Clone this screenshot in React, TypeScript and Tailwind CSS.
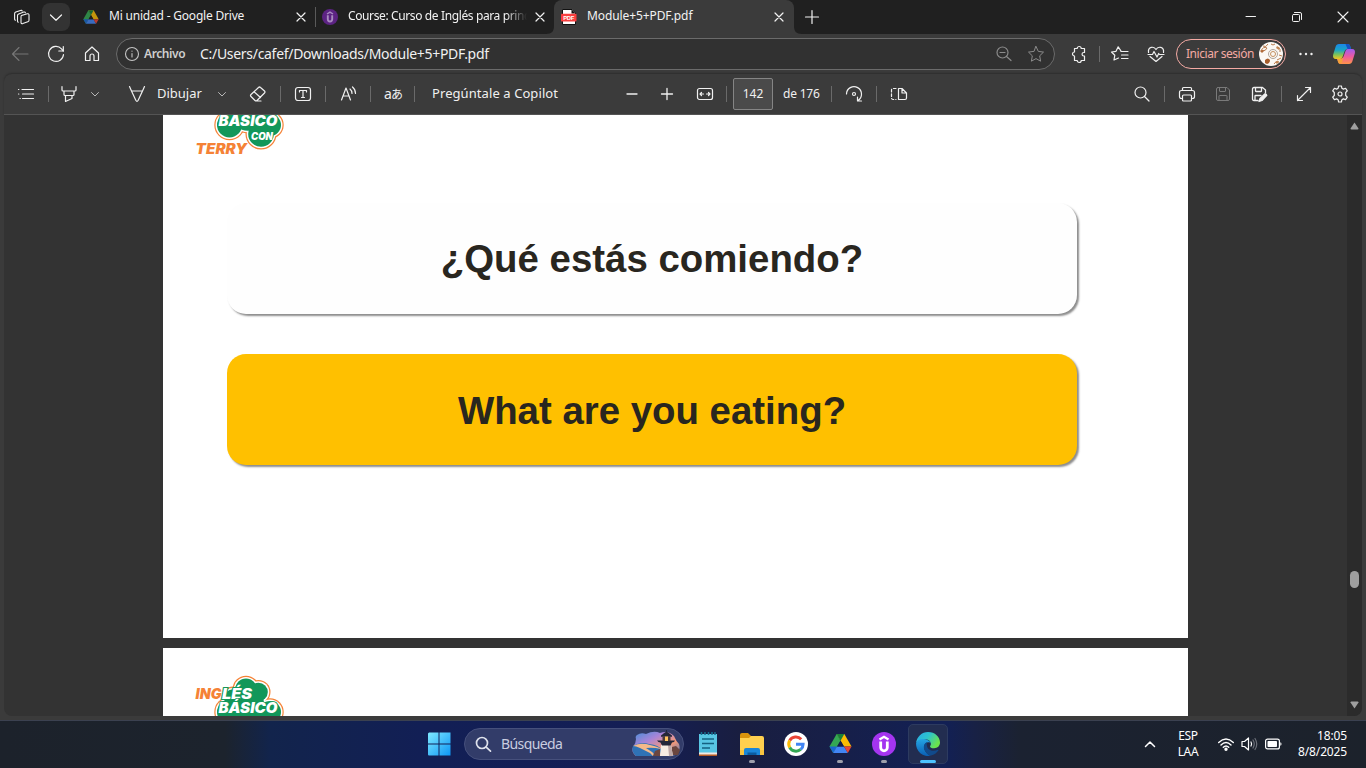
import type { ReactNode } from "react";

type SvgProps = { children: ReactNode; size?: number; sw?: number; className?: string };

function Ico({ children, size = 20, sw = 1, className = "" }: SvgProps) {
  return (
    <svg
      width={size}
      height={size}
      viewBox={`0 0 ${size} ${size}`}
      fill="none"
      stroke="currentColor"
      strokeWidth={sw}
      strokeLinecap="round"
      strokeLinejoin="round"
      className={`shrink-0 ${className}`}
    >
      {children}
    </svg>
  );
}

function Cell({ children, className = "" }: { children: ReactNode; className?: string }) {
  return <div className={`flex shrink-0 items-center justify-center ${className}`}>{children}</div>;
}

function Sep({ className = "" }: { className?: string }) {
  return (
    <div className={`w-3 shrink-0 pl-[6px] ${className}`}>
      <div className="h-4 w-px bg-[#6a6a6a]" />
    </div>
  );
}

const CloseX = () => (
  <Ico size={12} sw={1.2}>
    <path d="M2 2l8 8M10 2l-8 8" />
  </Ico>
);

const Chevron = ({ className = "" }: { className?: string }) => (
  <Ico size={12} sw={1} className={className}>
    <path d="M2.5 4.5L6 8l3.5-3.5" />
  </Ico>
);

function DriveLogo({ size, dim = false }: { size: number; dim?: boolean }) {
  return (
    <svg width={size} height={size} viewBox="0 0 24 24" className={`shrink-0 ${dim ? "opacity-75" : ""}`}>
      <path d="M16 2l7.5 13.2h-7.8L8 2z" fill="#fbbc04" />
      <path d="M8 2h8l-4 7z" fill="#188038" />
      <path d="M8 2l4 7-7.600 13L.5 15.200z" fill="#34a853" />
      <path d="M.5 15.2h7.8L4.4 22z" fill="#1967d2" />
      <path d="M8.3 15.2h7.4L19.6 22H4.4z" fill="#4285f4" />
      <path d="M15.7 15.2h7.8L19.6 22z" fill="#ea4335" />
      <path d="M12 9.2l3.6 6H8.4z" fill={dim ? "#202020" : "#151f4a"} />
    </svg>
  );
}

function UdemyLogo({ size, bg, fg }: { size: number; bg: string; fg: string }) {
  return (
    <svg width={size} height={size} viewBox="0 0 24 24" className="shrink-0">
      <circle cx="12" cy="12" r="12" fill={bg} />
      <path d="M7.5 7.500L12 4.700 16.500 7.500" fill="none" stroke={fg} strokeWidth="2.2" />
      <path d="M8.700 9.500v6a3.300 3.300 0 0 0 6.600 0v-6" fill="none" stroke={fg} strokeWidth="2.8" />
    </svg>
  );
}

function TabBar() {
  return (
    <div className="flex h-[34px] shrink-0 items-center bg-[#202020] text-[12px] text-[#f2f2f2]">
      <div className="w-[42px] shrink-0 pl-[13px]">
        <Ico size={18} sw={1.1}>
          <path d="M8.500 7.500l5.800-1.700c1-.3 1.700.2 1.700 1.200v5.200c0 .8-.4 1.300-1.200 1.600l-5 1.800c-1 .3-1.800-.2-1.800-1.200V8.900c0-.7.200-1.200.5-1.400z" />
          <path d="M5.300 14.200c-.6-.2-.8-.6-.8-1.300V7.500c0-.8.400-1.300 1.200-1.600l5-1.800c.9-.3 1.500 0 1.700.7" />
          <path d="M2.500 12.200c-.6-.2-.9-.6-.9-1.300V5.700c0-.8.400-1.300 1.200-1.600l4.700-1.700c.9-.3 1.500 0 1.700.6" />
        </Ico>
      </div>
      <Cell className="h-7 w-7 rounded-lg bg-[#333333]">
        <Ico size={14} sw={1.2}>
          <path d="M1.500 5L7 10.300 12.500 5" />
        </Ico>
      </Cell>
      <div className="flex w-[245px] shrink-0 items-center pb-px pl-[13px]">
        <DriveLogo size={16} dim />
        <span className="ml-[10px] w-[183px] pb-px whitespace-nowrap tracking-[-0.2px]">Mi unidad - Google Drive</span>
        <Cell className="w-[18px]"><CloseX /></Cell>
      </div>
      <div className="h-5 w-px bg-[#5a5a5a]" />
      <div className="flex w-[238px] shrink-0 items-center pb-px pl-[6px]">
        <UdemyLogo size={16} bg="#5c2383" fg="#a98cc0" />
        <span className="ml-[10px] w-[179px] overflow-hidden pb-px whitespace-nowrap tracking-[-0.38px] [mask-image:linear-gradient(to_right,black_88%,transparent)]">
          Course: Curso de Inglés para principiantes
        </span>
        <Cell className="ml-[4px] w-[18px]"><CloseX /></Cell>
      </div>
      <svg width="8" height="34" viewBox="0 0 8 34" className="-ml-2 shrink-0">
        <path d="M0 34c6 0 8-3 8-8v8z" fill="#3b3b3b" />
      </svg>
      <div className="flex h-[34px] w-[240px] shrink-0 items-center rounded-t-lg bg-[#3b3b3b] pb-px pl-[7px]">
        <svg width="16" height="16" viewBox="0 0 16 16" className="shrink-0">
          <path d="M1.500 .5h9.500L14.500 4v11.500h-13z" fill="#fff" stroke="#111" />
          <path d="M10.500 .5V4.500h4z" fill="#111" />
          <rect x="0" y="4.800" width="15.500" height="7.700" rx="0.800" fill="#f93e3e" />
          <text x="7.800" y="10.900" textAnchor="middle" textLength="11" fontSize="5.800" fontWeight="700" fill="#fff" fontFamily="Liberation Sans, sans-serif">PDF</text>
        </svg>
        <span className="ml-[10px] w-[183px] pb-px whitespace-nowrap tracking-[-0.1px]">Module+5+PDF.pdf</span>
        <Cell className="w-[18px]"><CloseX /></Cell>
      </div>
      <svg width="8" height="34" viewBox="0 0 8 34" className="shrink-0">
        <path d="M8 34c-6 0-8-3-8-8v8z" fill="#3b3b3b" />
      </svg>
      <Cell className="w-[19px] pb-px">
        <Ico size={16} sw={1.200}><path d="M8 1.500v13M1.500 8h13" /></Ico>
      </Cell>
      <div className="ml-auto flex">
        <Cell className="w-[46px]"><Ico size={12}><path d="M1 5.500h9.500" /></Ico></Cell>
        <Cell className="w-[46px]">
          <Ico size={12}>
            <rect x="1.500" y="3.500" width="7" height="7" rx="1" />
            <path d="M3.500 1.500h5.500q1.500 0 1.500 1.500v5.500" />
          </Ico>
        </Cell>
        <Cell className="w-[46px]"><Ico size={12} sw={1.1}><path d="M1 1l10 10M11 1L1 11" /></Ico></Cell>
      </div>
    </div>
  );
}

function AddressBar() {
  return (
    <div className="flex h-10 shrink-0 items-center bg-[#3b3b3b] pl-[2px] text-[#f0f0f0]">
      <Cell className="w-9 text-[#767676]"><Ico sw={1.100}><path d="M18 10H2.500M9 3.500L2.500 10 9 16.500" /></Ico></Cell>
      <Cell className="w-9">
        <Ico sw={1.2}>
          <path d="M17.500 10.500a7.500 7.500 0 1 1-2-5.700L17.300 7" /><path d="M17.300 2.500V7H12.800" />
        </Ico>
      </Cell>
      <Cell className="w-9">
        <Ico sw={1.2}><path d="M3.500 9L10 3l6.500 6v7.500H12V12a2 2 0 0 0-4 0v4.500H3.500z" /></Ico>
      </Cell>
      <div className="ml-[6px] flex h-8 w-[939px] shrink-0 items-center rounded-full border border-[#6b6b6b] bg-[#313131] pl-[6px]">
        <Ico size={18} className="text-[#c4c4c4]" sw={1.1}>
          <circle cx="9" cy="9" r="6.500" /><path d="M9 8.500v3.500M9 6v.2" />
        </Ico>
        <span className="ml-[3px] w-[56px] pb-px whitespace-nowrap text-[12px] font-semibold tracking-[-0.4px] text-[#cfcfcf]">Archivo</span>
        <span className="pb-[2px] whitespace-nowrap text-[14px] tracking-[-0.3px]">C:/Users/cafef/Downloads/Module+5+PDF.pdf</span>
        <div className="ml-auto flex pr-[2px] text-[#8b8b8b]">
          <Cell className="w-8">
            <Ico sw={1.200}><circle cx="8.500" cy="8.500" r="5.500" /><path d="M12.500 12.500l4.500 4M6 8.500h5" /></Ico>
          </Cell>
          <Cell className="w-8">
            <Ico><path d="M10 2.500l2.300 4.900 5.200.7-3.800 3.700.9 5.400-4.600-2.600-4.600 2.600.9-5.400L2.500 8.100l5.200-.7z" /></Ico>
          </Cell>
        </div>
      </div>
      <Cell className="ml-[6px] w-9">
        <Ico sw={1.2}>
          <path d="M5.500 4.500h2.700a2 2 0 0 1 4 0H15.500v4h-.700a1.700 1.700 0 0 0 0 3.500h.7v4.500h-3.300a2 2 0 0 1-4 0H5.500v-4.500a2 2 0 0 1 0-4z" />
        </Ico>
      </Cell>
      <Sep className="-ml-1" />
      <Cell className="-ml-[3px] w-9">
        <Ico sw={1.2}>
          <path d="M11 7L8.200 2.800 6 7.300l-4.500.7 3.300 3.200-.8 4.800 4.500-2" /><path d="M11 7.500h7M11.500 11h6.500M11.500 14.500h6.500" />
        </Ico>
      </Cell>
      <Cell className="w-9">
        <Ico sw={1.2}>
          <path d="M2.500 8.500c-.8-6 5.500-6.500 7.500-3 2-3.500 8.300-3 7.500 3M4 12.500l6 5 6-5" />
          <path d="M2 10.500h4.500l1.500-3 3 5.500 1.700-3.500.8 1H18" />
        </Ico>
      </Cell>
      <div className="ml-[2px] flex h-[30px] w-[110px] shrink-0 items-center rounded-full border border-[#f4aaa4] pl-[9px]">
        <span className="w-[73px] pb-px whitespace-nowrap text-[12px] tracking-[-0.45px] text-[#f4aaa4]">Iniciar sesión</span>
        <svg width="24" height="24" viewBox="0 0 24 24" className="shrink-0">
          <circle cx="12" cy="12" r="12" fill="#fbf8f4" />
          <g fill="none" stroke="#b87a4c" strokeWidth="1">
            <circle cx="14" cy="12" r="4.500" stroke="#b0a49a" /><circle cx="14" cy="12" r="2.500" stroke="#c5905e" />
            <path d="M2 9q2-5 6-3-1 3-5 3M4 4q3 2 5-2M19 5q3 2 2 5M18 18l4-2M15 22q2-4 5-2M12 2q2 2 4 0M20 13l3 1" />
          </g>
          <path d="M6 18q3-3 5 0 0 3-3 4l-2-1z" fill="#a65d2c" /><path d="M1 9q3-2 4 0l-2 2z" fill="#b06a3a" />
          <path d="M18 4l3 2-1 2-3-2zM16 20l3-1 1 1-2 2z" fill="#c28555" />
        </svg>
      </div>
      <Cell className="ml-[2px] w-9">
        <svg width="16" height="4" viewBox="0 0 16 4" fill="currentColor">
          <circle cx="2.500" cy="2" r="1.200" /><circle cx="8" cy="2" r="1.200" /><circle cx="13.500" cy="2" r="1.200" />
        </svg>
      </Cell>
      <Cell className="ml-[2px] w-9">
        <svg width="24" height="24" viewBox="0 0 24 24">
          <defs>
            <linearGradient id="cpA" x1="0" y1="0" x2="0" y2="1">
              <stop offset="0" stopColor="#1b87e8" /><stop offset=".4" stopColor="#19a5c8" /><stop offset=".7" stopColor="#7cc25a" /><stop offset="1" stopColor="#f2c522" />
            </linearGradient>
            <linearGradient id="cpB" x1="0" y1="0" x2="0" y2="1">
              <stop offset="0" stopColor="#a05cf0" /><stop offset=".5" stopColor="#ec5aa0" /><stop offset="1" stopColor="#ff9448" />
            </linearGradient>
          </defs>
          <path d="M7 2h8.500c1.500 0 2.300.8 2.700 2.200L19 7h-3c-2 0-3 1-3.500 2.500L10.500 15c-.5 1.500-1.500 2-3 2H4C1.500 17 .5 15.200 1.200 12.500L3.700 4.500C4.200 2.900 5.200 2 7 2z" fill="url(#cpA)" />
          <path d="M17 22H9c-1.700 0-2.500-.8-3-2.200L5.200 17H8c2 0 3-1 3.500-2.500L13.500 9c.5-1.500 1.500-2 3-2H20c2.500 0 3.500 1.800 2.800 4.500l-2.500 8C19.800 21.100 18.800 22 17 22z" fill="url(#cpB)" />
          <path d="M5.200 17H8c2 0 3-1 3.500-2.500l-1 4.500q-1 3-2.500 3-1.500-.5-2-2.200z" fill="#f5a13a" />
          <path d="M15.500 2c1.500 0 2.300.8 2.700 2.200L19 7h-3.500L13.500 2z" fill="#1552c4" />
        </svg>
      </Cell>
    </div>
  );
}

function PdfToolbar() {
  return (
    <div className="mx-1 flex h-[41px] shrink-0 items-center rounded-t-lg border-b border-[#545454] bg-[#3b3b3b] pl-[6px] text-[#f0f0f0] shadow-[0_-1px_2px_rgba(0,0,0,0.25)]">
      <Cell className="w-8">
        <Ico sw={1.2}><path d="M6 5.500h11.500M6.500 10h11M6.500 14.500h11M2.500 5.500h.3M2.500 10h.3M4 14.500h.3" /></Ico>
      </Cell>
      <Sep />
      <Cell className="w-[30px]">
        <Ico sw={1.2}><path d="M3 2.500V6q0 1 1 1h12q1 0 1-1V2.500M5 7v3.500q0 1 1 1h8q1 0 1-1V7M6.500 11.500v6l6.500-3v-3" /></Ico>
      </Cell>
      <Cell className="w-[22px] text-[#b8b8b8]"><Chevron /></Cell>
      <Cell className="ml-4 w-[30px]">
        <Ico sw={1.2}><path d="M2.500 2.500L4.500 7h11l2-4.500M4.500 7l4.300 9.300q1.200 2 2.400 0L15.500 7" /></Ico>
      </Cell>
      <span className="ml-[5px] w-[54px] whitespace-nowrap text-[13px]">Dibujar</span>
      <Cell className="w-[22px] text-[#b8b8b8]"><Chevron /></Cell>
      <Cell className="ml-[10px] w-[30px]">
        <Ico sw={1.2}><path d="M10.500 3.500q1-1 2 0l4 3.500q1 1 0 2L9 16.500q-1 1-2 0l-4-4q-1-1 0-2zM6 7.800l6.500 5.700M8 17h5" /></Ico>
      </Cell>
      <Sep className="ml-px" />
      <Cell className="ml-[2px] w-[30px]">
        <Ico sw={1.200}><rect x="2.500" y="3.500" width="15" height="13" rx="2.500" /><path d="M6.500 8V6.500h7V8M10 6.500v7M8.500 13.500h3" /></Ico>
      </Cell>
      <Sep className="mr-[3px] ml-px" />
      <Cell className="w-[30px]">
        <Ico sw={1.2}><path d="M2.500 16L7 4l4.500 12M4 12h6M11 5q2 1.500 2 4.500M13.500 3q3 2.500 3 6.500" /></Ico>
      </Cell>
      <Sep />
      <Cell className="ml-px w-[32px]">
        <span className="whitespace-nowrap text-[14px] leading-none tracking-[-1px]">a<span className="text-[12px] [font-family:'Noto_Sans_CJK_JP',sans-serif]">あ</span></span>
      </Cell>
      <Sep className="-ml-px" />
      <span className="ml-[12px] w-[185px] whitespace-nowrap text-[13px] tracking-[0.08px]">Pregúntale a Copilot</span>
      <Cell className="w-[30px]"><Ico sw={1.3}><path d="M5 10h10" /></Ico></Cell>
      <Cell className="ml-[5px] w-[30px]"><Ico sw={1.3}><path d="M10 4.500v11M4.500 10h11" /></Ico></Cell>
      <Cell className="ml-2 w-[30px]">
        <Ico sw={1.2}><rect x="2.500" y="4.500" width="15" height="11" rx="2" /><path d="M5 10h3.500M11.500 10H15M6.500 8.500L5 10l1.500 1.500M13.500 8.500L15 10l-1.500 1.500" /></Ico>
      </Cell>
      <Sep />
      <Cell className="ml-px h-8 w-10 rounded-[2px] border border-[#858585] bg-[#4a4a4a] text-[12px]">142</Cell>
      <span className="ml-[10px] w-[42px] whitespace-nowrap text-[12px] tracking-[-0.2px]">de 176</span>
      <Sep />
      <Cell className="ml-[2px] w-[30px]">
        <Ico sw={1.2}><path d="M2.500 10a7.500 7.500 0 1 1 11.500 6.500M13.500 13v4h4" /><circle cx="10" cy="10" r="1.500" /></Ico>
      </Cell>
      <Sep className="ml-px" />
      <Cell className="ml-[2px] w-[30px]">
        <Ico sw={1.200}><path d="M9.500 4.500v11H16q1.500 0 1.500-1.500V9L13 4.500zM13 4.500V9h4.500" /><path d="M7 4.500H4q-1.500 0-1.500 1.500v8q0 1.500 1.500 1.500h3" strokeDasharray="2.500 2" /></Ico>
      </Cell>
      <Cell className="ml-auto w-[30px]"><Ico sw={1.200}><circle cx="8.500" cy="8.500" r="5.500" /><path d="M12.500 12.500L17 17" /></Ico></Cell>
      <Sep className="ml-px" />
      <Cell className="ml-[2px] w-[30px]">
        <Ico sw={1.200}><path d="M5.500 6V4.500q0-1 1-1h7q1 0 1 1V6M5.500 14.500h-1q-2 0-2-2v-4q0-2 2-2h11q2 0 2 2v4q0 2-2 2h-1" /><rect x="5.500" y="11" width="9" height="6" rx="1" /></Ico>
      </Cell>
      <Cell className="ml-[6px] w-[30px] text-[#7a7a7a]">
        <Ico><path d="M5 3.500h9l2.500 2.500v9q0 1.500-1.500 1.500H5q-1.500 0-1.500-1.500V5q0-1.500 1.500-1.500zM6.500 3.500V7q0 .5.500.5h5q.5 0 .5-.5V3.500M6 16.500V12q0-.5.500-.5h7q.5 0 .5.500v4.500" /></Ico>
      </Cell>
      <Cell className="ml-[6px] w-[30px]">
        <Ico sw={1.3}>
          <path d="M9 16.500H5q-1.500 0-1.500-1.500V5q0-1.500 1.500-1.500h8.500L16.500 6v3M6.500 3.500V7q0 .5.500.5h5q.5 0 .5-.5V3.500M6 16.500V12q0-.5.500-.5H12" />
          <path d="M10 17.500l1-3 5-4.700q1.500 0 1.800 1.500L13 16.500z" fill="currentColor" />
        </Ico>
      </Cell>
      <Sep className="ml-px" />
      <Cell className="ml-[2px] w-[30px]"><Ico sw={1.2}><path d="M3.500 16.500l13-13M11.500 3.500h5v5M3.500 11.500v5h5" /></Ico></Cell>
      <Cell className="mr-[7px] ml-[6px] w-[30px]">
        <Ico sw={1.200}>
          <path d="M8.600 2h2.800l.5 2.300 1.500.8 2.200-.8 1.700 2.500L15.700 8.500v3l1.600 1.700-1.700 2.500-2.200-.8-1.500.8-.5 2.300H8.600l-.5-2.300-1.500-.8-2.200.8-1.700-2.500 1.600-1.700v-3L2.700 6.800l1.700-2.500 2.200.8 1.500-.8z" /><circle cx="10" cy="10" r="2" />
        </Ico>
      </Cell>
    </div>
  );
}

const lobes = [
  [51, 14, 13.3],
  [63.5, 17, 12],
  [75, 37, 13.7],
  [34.5, 37, 15.2],
  [66, 46, 15.5],
  [53, 27, 18.5],
  [38, 23, 11.500],
];

function TerryLogo({ className = "" }: { className?: string }) {
  const text = {
    fontFamily: "Inter, sans-serif",
    fontWeight: 900,
    fontStyle: "italic",
    lengthAdjust: "spacingAndGlyphs" as const,
  };
  return (
    <svg width="94" height="70" viewBox="0 0 94 70" className={`block shrink-0 ${className}`}>
      <g fill="#f58236">{lobes.map(([x, y, r]) => <circle key={`${x}`} cx={x} cy={y} r={r} />)}</g>
      <g fill="#fff">{lobes.map(([x, y, r]) => <circle key={`${x}`} cx={x} cy={y} r={r - 1.2} />)}</g>
      <g fill="#12975a">{lobes.map(([x, y, r]) => <circle key={`${x}`} cx={x} cy={y} r={r - 2.700} />)}</g>
      <text {...text} x="0.500" y="24" fontSize="14" textLength="26" fill="#f58236">ING</text>
      <text {...text} x="27" y="24" fontSize="14" textLength="30" fill="#fff" stroke="#12975a" strokeWidth="2" paintOrder="stroke">LÉS</text>
      <text {...text} x="23.500" y="38" fontSize="14.500" textLength="59" fill="#fff" stroke="#12975a" strokeWidth="1.500" paintOrder="stroke">BÁSICO</text>
      <text {...text} x="56" y="52" fontSize="10" textLength="22" fill="#fff">CON</text>
      <text {...text} x="0.500" y="65.700" fontSize="14" textLength="51.500" fill="#f58236">TERRY</text>
    </svg>
  );
}

function PdfView() {
  const card = "ml-[64px] flex h-[111px] w-[850px] items-center justify-center rounded-[19px] text-[38.4px] font-bold text-[#29261f] shadow-[2px_2px_2px_rgba(0,0,0,0.45)] [font-family:'Liberation_Sans',Arial,sans-serif]";
  return (
    <div className="mx-1 flex h-[601px] shrink-0 overflow-hidden rounded-b-lg bg-[#333333]">
      <div className="flex w-[1343px] flex-col gap-[10px] pl-[159px]">
        <div className="h-[523px] w-[1025px] shrink-0 overflow-hidden bg-white">
          <TerryLogo className="mt-[-27px] ml-8" />
          <div className={`mt-[45px] bg-[#fefefe] ${card}`}><span className="whitespace-nowrap">¿Qué estás comiendo?</span></div>
          <div className={`mt-10 bg-[#ffc000] ${card}`}><span className="pt-[2px] whitespace-nowrap">What are you eating?</span></div>
        </div>
        <div className="h-[68px] w-[1025px] shrink-0 overflow-hidden bg-white pt-[27px] pl-8">
          <TerryLogo />
        </div>
      </div>
      <div className="flex w-[15px] flex-col items-center bg-[#2b2b2b] text-[#9f9f9f]">
        <svg width="9" height="8" viewBox="0 0 9 8" className="mt-[7px]"><path d="M4.500.5L8.500 6.500q0 1-1 1h-6q-1 0-1-1z" fill="currentColor" /></svg>
        <div className="mt-[441px] h-[17px] w-[9px] rounded-full bg-[#9f9f9f]" />
        <svg width="9" height="8" viewBox="0 0 9 8" className="mt-auto mb-[7px]"><path d="M4.500 7.500L8.500 1.500q0-1-1-1h-6q-1 0-1 1z" fill="currentColor" /></svg>
      </div>
    </div>
  );
}

function TaskItem({ children, run = false, className = "" }: { children: ReactNode; run?: boolean; className?: string }) {
  return (
    <div className={`flex h-10 w-11 shrink-0 flex-col items-center pt-2 ${className}`}>
      <div className="flex h-6 items-center">{children}</div>
      {run && <div className="mt-1 h-[3px] w-[6px] rounded-full bg-[#9ea0ac]" />}
    </div>
  );
}

function Taskbar() {
  return (
    <div className="flex h-[48px] shrink-0 items-center border-t border-[#3b4150] bg-[linear-gradient(to_right,#1c222b_0px,#1c232d_225px,#12244c_270px,#121f55_420px,#141e55_640px,#191e40_740px,#171f48_830px,#122055_945px,#182145_975px,#1b2231_1020px,#1c222b_1366px)] pb-[2px] text-white">
      <svg width="24" height="24" viewBox="0 0 24 24" className="ml-[427px] shrink-0">
        <defs>
          <linearGradient id="win" x1="0" y1="0" x2="1" y2="1"><stop offset="0" stopColor="#7fe9ff" /><stop offset="1" stopColor="#0d96f5" /></linearGradient>
        </defs>
        <path d="M2 .5h9.500V11.500H1V1.500zM12.500.5H23.500V11.500h-11zM1 12.500h10.500v11H2q-1 0-1-1zM12.500 12.500h11v11h-11z" fill="url(#win)" />
      </svg>
      <div className="ml-[13px] flex h-8 w-[220px] shrink-0 items-center rounded-full border border-[#46507c] bg-[#323c69] pl-[9px]">
        <Ico size={18} sw={1.700} className="text-[#dfe2ec]"><circle cx="8" cy="8" r="5.500" /><path d="M12.200 12.200l4.300 4" /></Ico>
        <span className="ml-[9px] w-[131px] text-[14px] tracking-[-0.6px] text-[#c9cde0]">Búsqueda</span>
        <svg width="48" height="28" viewBox="0 0 48 28" className="shrink-0">
          <defs>
            <linearGradient id="sky" x1="0" y1="0" x2="1" y2="1"><stop offset="0" stopColor="#3f8fd8" /><stop offset=".35" stopColor="#a884d8" /><stop offset=".65" stopColor="#f79a78" /><stop offset="1" stopColor="#3d74c0" /></linearGradient>
          </defs>
          <path d="M5 5Q9 2 14 4q8-4 14-1 8-3 14 3 2 5 5 8 2 6-2 9-3 4-9 3H4q-5-4-3-9 3-4 3-8-1-3 1-4z" fill="url(#sky)" />
          <path d="M1 16q8-5 16-2 10 1 13 6l-3 6H4q-5-4-3-10z" fill="#2f72b5" />
          <path d="M1 16q8-4 17-1 9 2 11 4-8-2-15-1l6 4q3 2 1 4l-3-3-10-5q-4-2-7-2z" fill="#f5b98a" />
          <path d="M40 17l4-1 4 4-2 5h-6zM23 21l5-2v7h-7z" fill="#6b463f" />
          <path d="M29 15h10l2 11H28z" fill="#f7ece2" /><path d="M36 15h3l2 11h-4z" fill="#bfa9a8" />
          <path d="M25 10.500h18l-1 1.500-2 .5-1.500 3H30l-1.500-3-2-.5z" fill="#242739" />
          <path d="M29 5.500Q32 3 34.500 1.500 37 3 40 5.500v1.300H29z" fill="#242739" />
          <path d="M30.500 6.500h8v4.500h-8z" fill="#4c3b38" /><path d="M33 6.500h3v4.500h-3z" fill="#ffc45e" /><path d="M34.500 0v3" stroke="#242739" />
        </svg>
      </div>
      <TaskItem className="ml-[2px]">
        <svg width="20" height="24" viewBox="0 0 20 24">
          <path d="M1 2h18v19H1z" fill="#58c6e4" /><path d="M1 20.500h18V23H1z" fill="#f1e9e2" /><path d="M1 22.500h18v1.500H1z" fill="#b55a23" />
          <path d="M3.500 0v3M7 0v3M10.500 0v3M14 0v3M17 0v3" stroke="#176f8f" strokeWidth="1.500" />
          <path d="M4 7h12M4 11.500h12M4 16h8" stroke="#146181" strokeWidth="1.600" />
        </svg>
      </TaskItem>
      <TaskItem run>
        <svg width="24" height="24" viewBox="0 0 24 24">
          <path d="M0 3q0-2 2-2h6l3 3v3H0z" fill="#d9930c" />
          <path d="M0 6h9l2-2h11q2 0 2 2v17H0z" fill="#ffd04f" />
          <path d="M0 18h24v5H0z" fill="#f9c440" />
          <path d="M4 23v-5q0-2 2-2h12q2 0 2 2v5z" fill="#1a86d8" /><path d="M7.500 23v-2.500h9V23z" fill="#0b5b9e" />
        </svg>
      </TaskItem>
      <TaskItem>
        <svg width="24" height="24" viewBox="0 0 24 24">
          <circle cx="12" cy="12" r="12" fill="#fff" />
          <g fill="none" strokeWidth="3">
            <path d="M17.200 7.200A7.200 7.200 0 0 0 5.700 8.500" stroke="#ea4335" />
            <path d="M5.700 8.500a7.200 7.200 0 0 0 0 7" stroke="#fbbc05" />
            <path d="M5.700 15.500a7.200 7.200 0 0 0 11 1.900" stroke="#34a853" />
            <path d="M16.700 17.400A7 7 0 0 0 19.100 12.200H12" stroke="#4285f4" />
          </g>
        </svg>
      </TaskItem>
      <TaskItem run><DriveLogo size={23} /></TaskItem>
      <TaskItem run><UdemyLogo size={24} bg="#a435f0" fg="#fff" /></TaskItem>
      <div className="ml-[2px] flex h-10 w-10 shrink-0 flex-col items-center rounded-[5px] border border-[#2d3b60] bg-[#222d50] pt-[7px]">
        <svg width="24" height="24" viewBox="0 0 24 24" className="shrink-0">
          <defs>
            <linearGradient id="eg" x1="0" y1="0" x2="1" y2=".5"><stop offset="0" stopColor="#2aa9e6" /><stop offset=".5" stopColor="#2cc3cf" /><stop offset="1" stopColor="#6be34b" /></linearGradient>
            <linearGradient id="eb" x1="0" y1="0" x2="0" y2="1"><stop offset="0" stopColor="#25a5e4" /><stop offset="1" stopColor="#0a5fb4" /></linearGradient>
          </defs>
          <path d="M.1 11A12 12 0 0 1 12 0c7 0 12 5 12 10.500 0 3.500-2.500 5.700-5.800 5.700-3 0-4.200-1-4.200-1.800 0-.6.900-1 .9-2.700 0-2-2-4.200-5.200-4.200C5 7.500.5 9.500.1 11z" fill="url(#eg)" />
          <path d="M.1 11C1 8 5 6.500 9 7.300c3.500.5 5.700 2.500 5.900 4.400C13.500 9 8.500 10 8 14.500 7.700 18 11 22.800 15 23.600A12 12 0 0 1 .1 11z" fill="url(#eb)" />
          <path d="M11 10.200C8 11 7.200 15 8.500 18c1.500 3.500 4.200 5.500 6.500 5.600 3-.7 5.800-2.600 7.500-5.300.3-.5-.1-.8-.6-.5-5.900 2.900-12.400-.3-10.900-7.600z" fill="#114a8b" />
        </svg>
        <div className="mt-[4px] h-[3px] w-4 shrink-0 rounded-full bg-[#4cc2ff]" />
      </div>
      <div className="ml-auto flex items-center text-[12px] leading-[16px]">
        <Ico size={14} sw={1.500} className="mr-[20px]"><path d="M2.500 9.500L7 5l4.500 4.500" /></Ico>
        <div className="flex w-[22px] flex-col items-center whitespace-nowrap tracking-[-0.3px]"><span>ESP</span><span>LAA</span></div>
        <Ico size={18} sw={1.400} className="ml-[18px]">
          <path d="M1.700 7.500q7.300-7 14.600 0M4 10q5-5 10 0M6.300 12.300q2.700-2.600 5.400 0" /><circle cx="9" cy="14.300" r="1" fill="currentColor" />
        </Ico>
        <Ico size={18} sw={1.200} className="ml-[5px]">
          <path d="M2 6.500h2.500L8.500 3v12L4.500 11.500H2z" /><path d="M11 7q1.200 2 0 4" /><path d="M13 5q2.500 4 0 8M15 3.500q3.500 5.500 0 11" stroke="#6b6f78" />
        </Ico>
        <svg width="17" height="12" viewBox="0 0 17 12" className="ml-[7px]">
          <rect x=".6" y="1.100" width="13.800" height="9.800" rx="2" fill="none" stroke="#fff" strokeWidth="1.200" /><rect x="2.500" y="3" width="9.500" height="6" rx=".8" fill="#fff" /><path d="M15.300 4.200q1.200 0 1.200 1.800t-1.200 1.800z" fill="#fff" />
        </svg>
        <div className="mr-[19px] ml-[7px] flex w-[58px] flex-col items-end whitespace-nowrap tracking-[-0.15px]"><span>18:05</span><span>8/8/2025</span></div>
      </div>
    </div>
  );
}

export default function App() {
  return (
    <div className="flex h-[768px] w-[1366px] flex-col overflow-hidden bg-[#3b3b3b] [font-family:'Noto_Sans','Noto_Sans_CJK_JP',sans-serif]">
      <TabBar />
      <AddressBar />
      <PdfToolbar />
      <PdfView />
      <div className="h-1 shrink-0" />
      <Taskbar />
    </div>
  );
}
